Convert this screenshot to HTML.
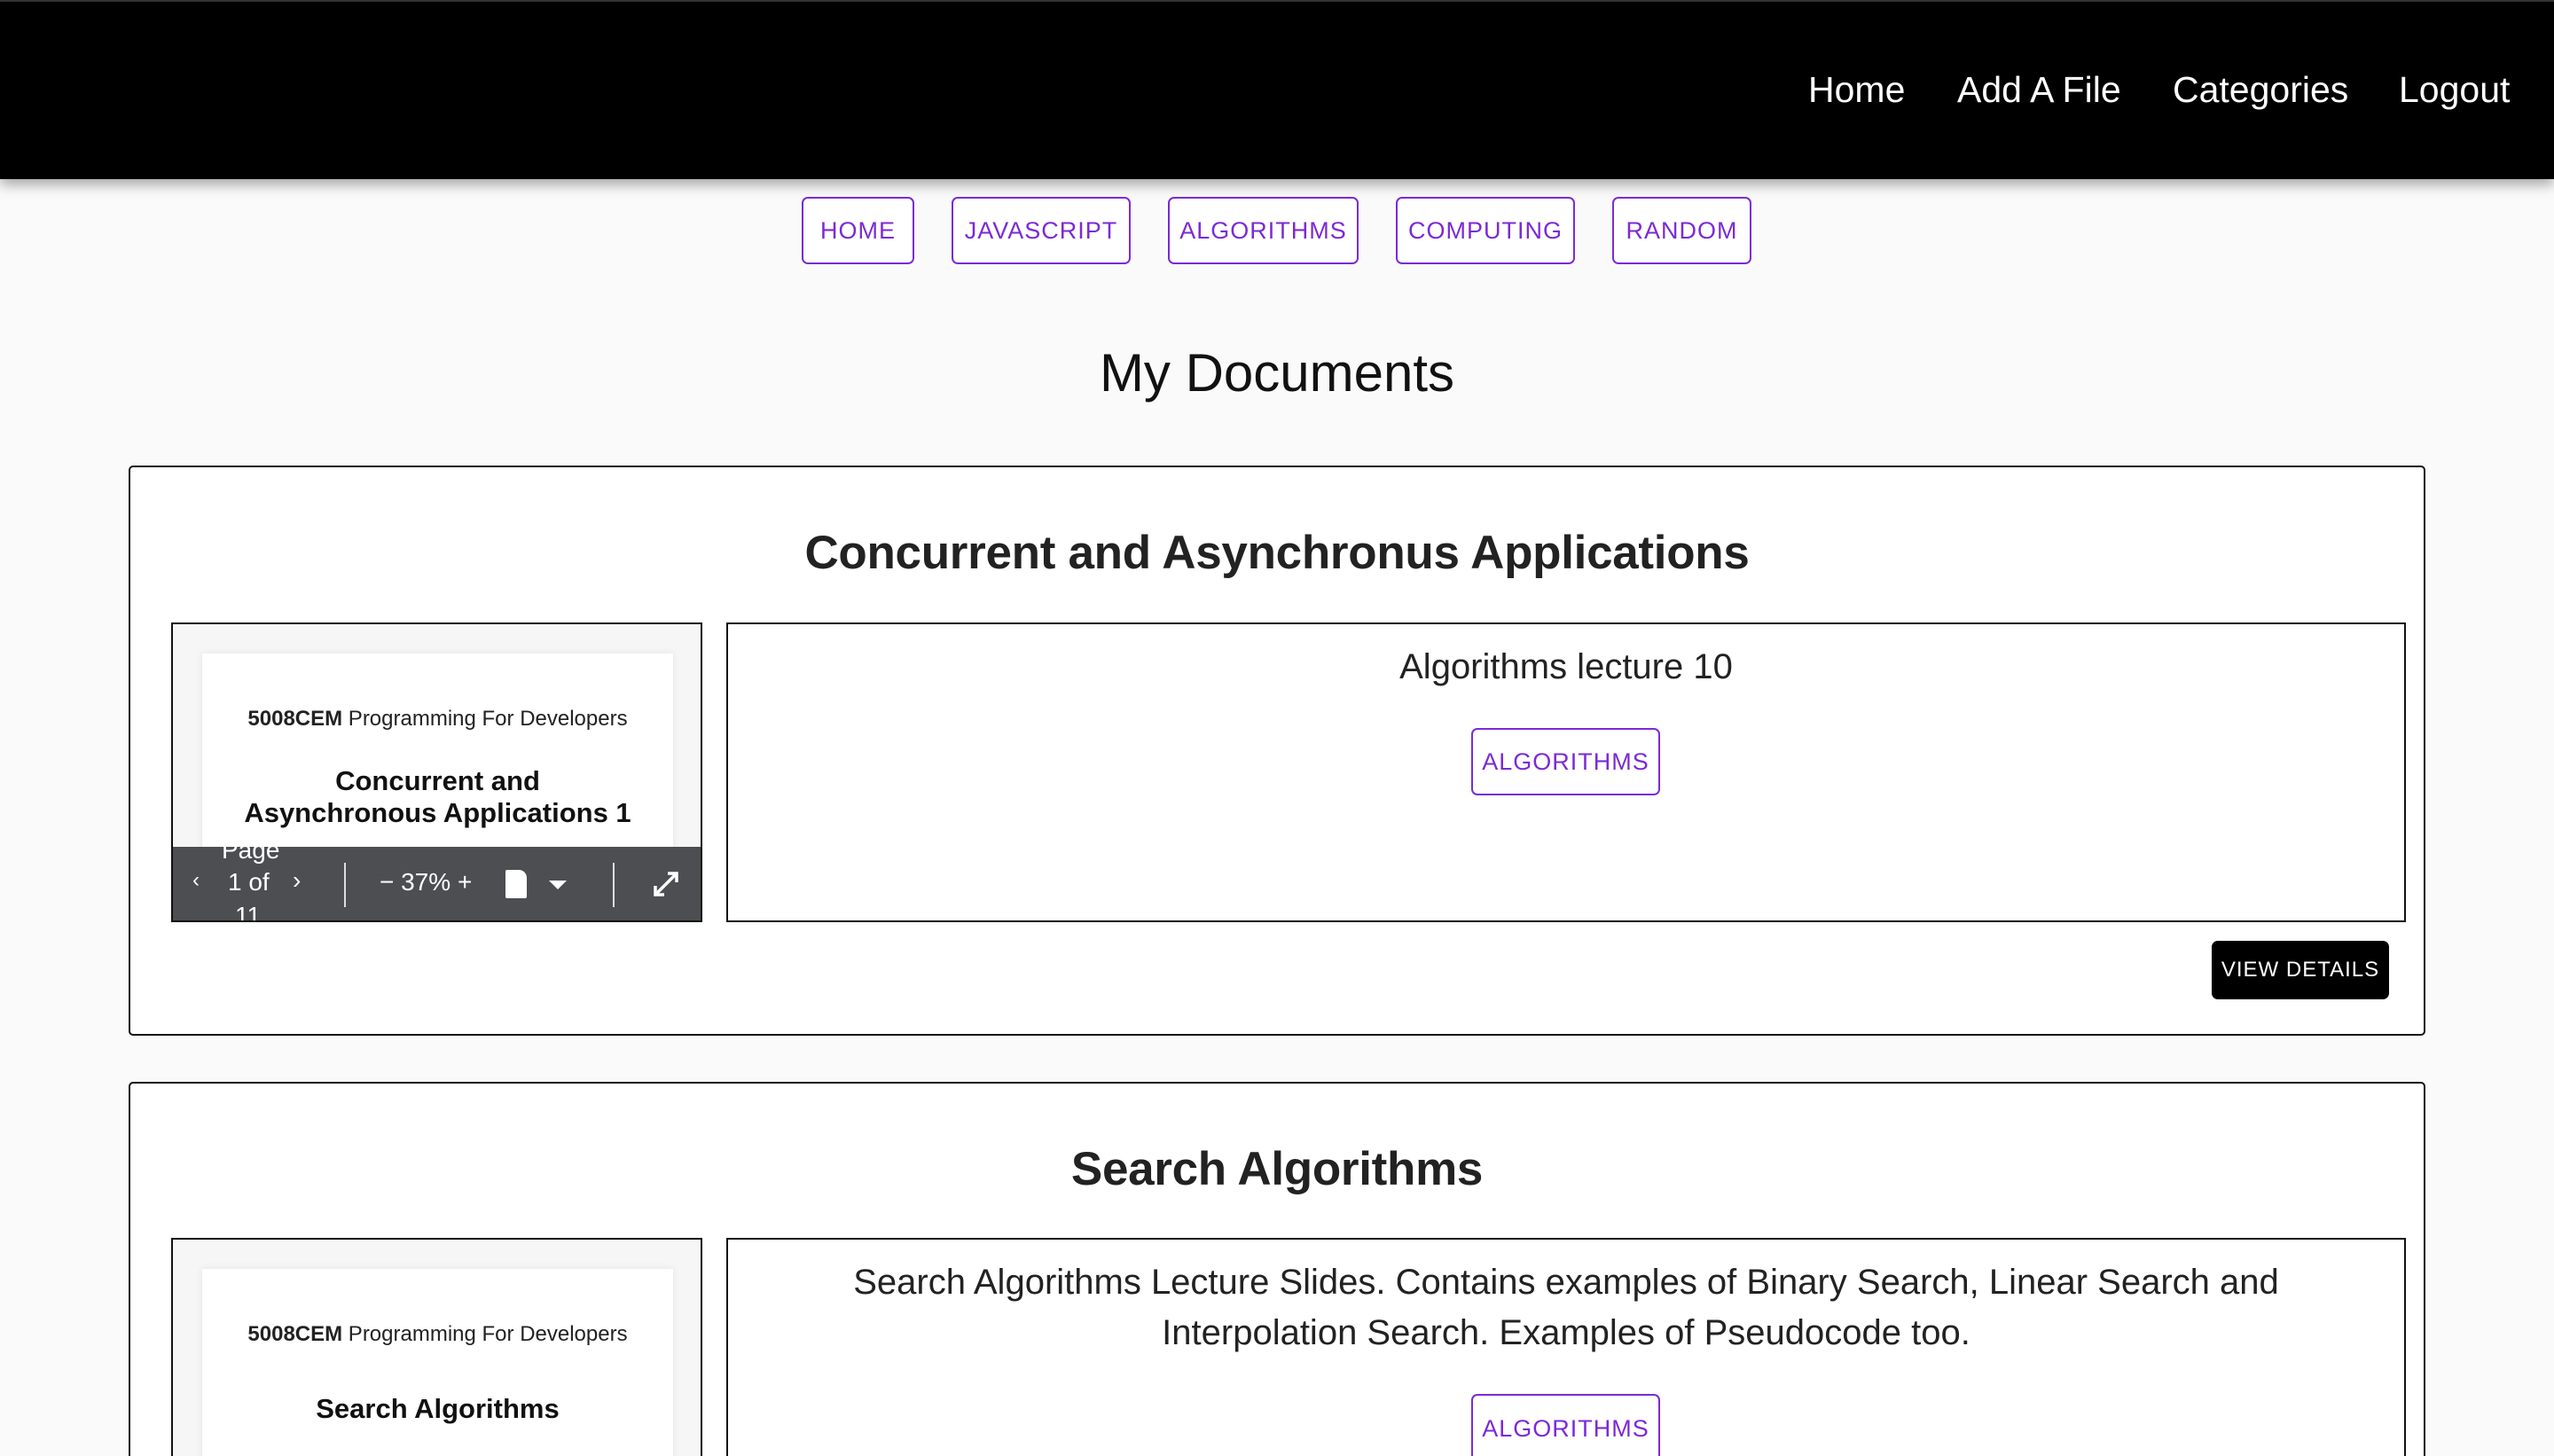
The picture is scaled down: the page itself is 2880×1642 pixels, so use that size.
<!DOCTYPE html>
<html style="height:1642px;overflow:hidden"><head><meta charset="utf-8"><style>
*{box-sizing:border-box;margin:0;padding:0}
body{width:2880px;height:1642px;overflow:hidden;background:#fafafa;font-family:"Liberation Sans",Arial,sans-serif;position:relative;color:#111}
.nav{position:absolute;left:0;top:0;width:2880px;height:202px;background:#000;box-shadow:0 6px 14px rgba(0,0,0,.35);border-top:2px solid #333}
.nav a{position:absolute;top:76px;color:#fff;font-size:41px;text-decoration:none;white-space:nowrap}
.chip{position:absolute;height:76px;border:2.5px solid #7b2ad8;border-radius:7px;color:#7b2ad8;font-size:27px;display:flex;align-items:center;justify-content:center;background:#fff;letter-spacing:1px}
.abs{position:absolute}
.card{position:absolute;left:145px;width:2590px;background:#fff;border:2px solid #111;border-radius:5px}
.ctitle{position:absolute;left:0;width:2880px;text-align:center;font-size:53px;font-weight:bold;color:#222;letter-spacing:-0.3px}
.pdf{position:absolute;left:193px;width:599px;height:338px;border:2px solid #111;background:#f6f6f6;overflow:hidden}
.page{position:absolute;left:33px;top:33px;width:531px;height:320px;background:#fff;box-shadow:0 0 8px rgba(0,0,0,.08);text-align:center;font-family:"Liberation Sans",sans-serif}
.tb{position:absolute;left:0;bottom:0;width:100%;height:83px;background:#4d4e52;color:#fff;font-size:28px}
.desc{position:absolute;left:819px;width:1894px;height:338px;border:2px solid #111;background:#fff;text-align:center;font-size:40px;color:#222}
</style></head><body>
<div class="nav">
<a style="left:2039px">Home</a>
<a style="left:2207px">Add A File</a>
<a style="left:2450px">Categories</a>
<a style="left:2705px">Logout</a>
</div>
<div class="chip" style="left:904px;top:222px;width:127px">HOME</div>
<div class="chip" style="left:1073px;top:222px;width:202px">JAVASCRIPT</div>
<div class="chip" style="left:1317px;top:222px;width:215px">ALGORITHMS</div>
<div class="chip" style="left:1574px;top:222px;width:202px">COMPUTING</div>
<div class="chip" style="left:1818px;top:222px;width:157px">RANDOM</div>
<div class="abs" style="left:0;width:2880px;top:386px;text-align:center;font-size:60px;color:#111">My Documents</div>

<div class="card" style="top:525px;height:643px"></div>
<div class="ctitle" style="top:593px">Concurrent and Asynchronus Applications</div>
<div class="pdf" style="top:702px">
 <div class="page">
  <div style="margin-top:60px;font-size:24px;color:#222"><b>5008CEM</b> Programming For Developers</div>
  <div style="margin-top:38px;font-size:31px;font-weight:bold;line-height:36px">Concurrent and<br>Asynchronous Applications 1</div>
 </div>
 <div class="tb">
  <span class="abs" style="left:55px;top:-12px">Page</span>
  <span class="abs" style="left:22px;top:24px;font-size:24px">‹</span>
  <span class="abs" style="left:62px;top:24px">1 of</span>
  <span class="abs" style="left:135px;top:22px">›</span>
  <span class="abs" style="left:70px;top:62px">11</span>
  <div class="abs" style="left:193px;top:18px;width:2px;height:50px;background:#ddd"></div>
  <span class="abs" style="left:233px;top:24px">− 37% +</span>
  <div class="abs" style="left:375px;top:26px;width:24px;height:32px;background:#fff;border-radius:2px 9px 2px 2px"></div>
  <div class="abs" style="left:424px;top:38px;width:0;height:0;border-left:10px solid transparent;border-right:10px solid transparent;border-top:10px solid #fff"></div>
  <div class="abs" style="left:496px;top:18px;width:2px;height:50px;background:#ddd"></div>
  <svg class="abs" style="left:541px;top:27px" width="30" height="30" viewBox="0 0 30 30"><path d="M3 27L27 3M17 3h10v10M3 17v10h10" stroke="#fff" stroke-width="3.5" fill="none"/></svg>
 </div>
</div>
<div class="desc" style="top:702px"><div style="margin-top:26px">Algorithms lecture 10</div></div>
<div class="chip" style="left:1659px;top:821px;width:213px">ALGORITHMS</div>
<div class="abs" style="left:2494px;top:1061px;width:200px;height:66px;background:#000;border-radius:7px;color:#fff;font-size:24px;display:flex;align-items:center;justify-content:center;letter-spacing:1px">VIEW DETAILS</div>

<div class="card" style="top:1220px;height:422px;border-bottom:none;border-radius:5px 5px 0 0"></div>
<div class="ctitle" style="top:1288px">Search Algorithms</div>
<div class="pdf" style="top:1396px;height:246px;border-bottom:none">
 <div class="page">
  <div style="margin-top:60px;font-size:24px;color:#222"><b>5008CEM</b> Programming For Developers</div>
  <div style="margin-top:52px;font-size:31px;font-weight:bold">Search Algorithms</div>
 </div>
</div>
<div class="desc" style="top:1396px;height:246px;border-bottom:none;line-height:57px"><div style="margin-top:20px">Search Algorithms Lecture Slides. Contains examples of Binary Search, Linear Search and<br>Interpolation Search. Examples of Pseudocode too.</div></div>
<div class="chip" style="left:1659px;top:1572px;width:213px;height:70px;border-bottom:none;border-radius:7px 7px 0 0;align-items:flex-start;padding-top:22px">ALGORITHMS</div>
</body></html>
